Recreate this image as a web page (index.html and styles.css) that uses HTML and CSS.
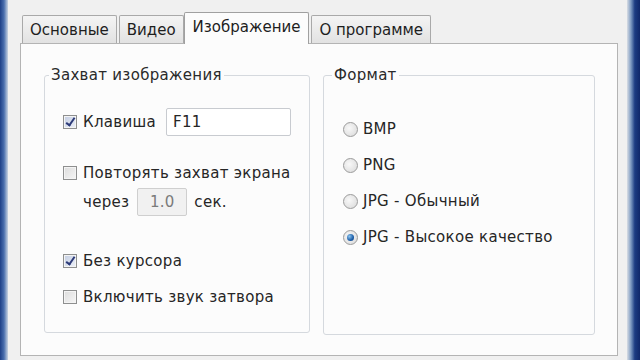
FILE: index.html
```html
<!DOCTYPE html>
<html lang="ru">
<head>
  <meta charset="UTF-8">
  <title>Настройки</title>
  <link rel="stylesheet" href="styles.css">
</head>
<body>
  <div class="window">
    <div class="frame-left"></div>

    <div class="dialog">
      <div class="tabs">
        <div class="tab">Основные</div>
        <div class="tab">Видео</div>
        <div class="tab active">Изображение</div>
        <div class="tab">О программе</div>
      </div>

      <div class="panel">
        <fieldset class="group group-capture">
          <legend>Захват изображения</legend>

          <div class="row row-key">
            <span class="check checked"></span>
            <span class="label">Клавиша</span>
            <div class="field field-key">F11</div>
          </div>

          <div class="row row-repeat">
            <span class="check"></span>
            <span class="label">Повторять захват экрана</span>
          </div>
          <div class="row row-interval">
            <span class="label">через</span>
            <div class="field field-interval">1.0</div>
            <span class="label">сек.</span>
          </div>

          <div class="row row-cursor">
            <span class="check checked"></span>
            <span class="label">Без курсора</span>
          </div>
          <div class="row row-sound">
            <span class="check"></span>
            <span class="label">Включить звук затвора</span>
          </div>
        </fieldset>

        <fieldset class="group group-format">
          <legend>Формат</legend>
          <div class="radio-row"><span class="radio"></span><span class="label">BMP</span></div>
          <div class="radio-row"><span class="radio"></span><span class="label">PNG</span></div>
          <div class="radio-row"><span class="radio"></span><span class="label">JPG - Обычный</span></div>
          <div class="radio-row"><span class="radio selected"></span><span class="label">JPG - Высокое качество</span></div>
        </fieldset>
      </div>
    </div>

    <div class="frame-right"></div>
  </div>
</body>
</html>
```

FILE: styles.css
```css
body {
  margin: 0;
  width: 640px;
  height: 360px;
  overflow: hidden;
  font-family: "DejaVu Sans", "Liberation Sans", sans-serif;
  font-size: 15px;
  letter-spacing: 0.3px;
  color: #262626;
  background-color: #f0f0f0;
}

.window {
  display: flex;
  height: 360px;
}

.frame-left {
  width: 8px;
  background: linear-gradient(to right, #1d3f86, #4a6fae 50%, #c9d4e2);
}

.frame-right {
  width: 13px;
  background: linear-gradient(to right, #d8dde4, #7e9bc2 30%, #1c3c82 60%, #10286a);
}

.dialog {
  flex: 1;
  padding: 12px 1px 0 12px;
  background-color: #f0f0f0;
}

/* Tabs */
.tabs {
  display: flex;
  align-items: flex-end;
  height: 31px;
  padding-left: 2px;
  letter-spacing: 0;
}

.tab {
  height: 27px;
  line-height: 29px;
  padding: 0 7px;
  margin-right: 2px;
  border: 1px solid #a9a9a9;
  border-bottom: none;
  border-radius: 2px 2px 0 0;
  background: linear-gradient(to bottom, #f4f4f4, #e2e2e2);
  color: #1e1e1e;
}

.tab.active {
  height: 31px;
  line-height: 29px;
  padding: 0 8px;
  margin: 0 2px -1px -2px;
  background: #fcfcfc;
  border-color: #a0a0a0;
  position: relative;
}

.panel {
  display: flex;
  gap: 13px;
  width: 551px;
  height: 289px;
  padding: 22px 22px 0 23px;
  border: 1px solid #b4b4b4;
  background-color: #fcfcfc;
}

/* Group boxes */
.group {
  margin: 0;
  height: 267px;
  padding: 0;
  border: 1px solid #d5d9de;
  border-radius: 3px;
  line-height: 18px;
}

.group legend {
  padding: 0 2px;
  color: #2a2a2a;
}

.group-capture {
  width: 266px;
  padding-left: 18px;
  box-sizing: border-box;
}

.group-capture legend {
  margin-left: -14px;
}

.group-format {
  flex: 1;
  padding-left: 19px;
}

.group-format legend {
  margin-left: -11px;
}

.row {
  display: flex;
  align-items: center;
}

.label {
  white-space: nowrap;
}

.row-key {
  margin-top: 24px;
}

.row-repeat {
  margin-top: 28px;
}

.row-interval {
  margin-top: 6px;
  padding-left: 20px;
}

.row-cursor {
  margin-top: 36px;
}

.row-sound {
  margin-top: 18px;
}

.check {
  width: 12px;
  height: 12px;
  margin-right: 6px;
  border: 1px solid #8e8f8f;
  background: linear-gradient(135deg, #dcdcdc, #f6f6f6);
  box-shadow: inset 0 0 0 1px #f4f4f4;
  position: relative;
  flex: none;
}

.check.checked {
  background: linear-gradient(135deg, #c3cde2, #eef1f8);
}

.check.checked::after {
  content: "";
  position: absolute;
  left: 4px;
  top: 0;
  width: 3px;
  height: 8px;
  border: solid #2c3a78;
  border-width: 0 2px 2px 0;
  transform: rotate(35deg);
}

.field {
  height: 26px;
  line-height: 26px;
  border: 1px solid #c8cbd0;
  border-radius: 2px;
  background-color: #fff;
}

.field-key {
  width: 117px;
  margin-left: 10px;
  padding-left: 6px;
}

.field-interval {
  width: 48px;
  margin: 0 7px 0 8px;
  text-align: center;
  color: #7b7b7b;
  background-color: #f1f1f1;
  border-color: #cfcfcf;
}

/* Radio buttons */
.radio-row {
  display: flex;
  align-items: center;
  margin-top: 18px;
}

.radio-row:first-of-type {
  margin-top: 36px;
}

.radio {
  width: 13px;
  height: 13px;
  margin-right: 5px;
  border: 1px solid #9b9b9b;
  border-radius: 50%;
  background: radial-gradient(circle at 40% 40%, #f8f8f8, #d8d8d8);
  position: relative;
  flex: none;
}

.radio.selected::after {
  content: "";
  position: absolute;
  left: 3px;
  top: 3px;
  width: 7px;
  height: 7px;
  border-radius: 50%;
  background: radial-gradient(circle at 35% 35%, #8cc4ef, #1d5ea8 60%, #0e3c7a);
}
```
